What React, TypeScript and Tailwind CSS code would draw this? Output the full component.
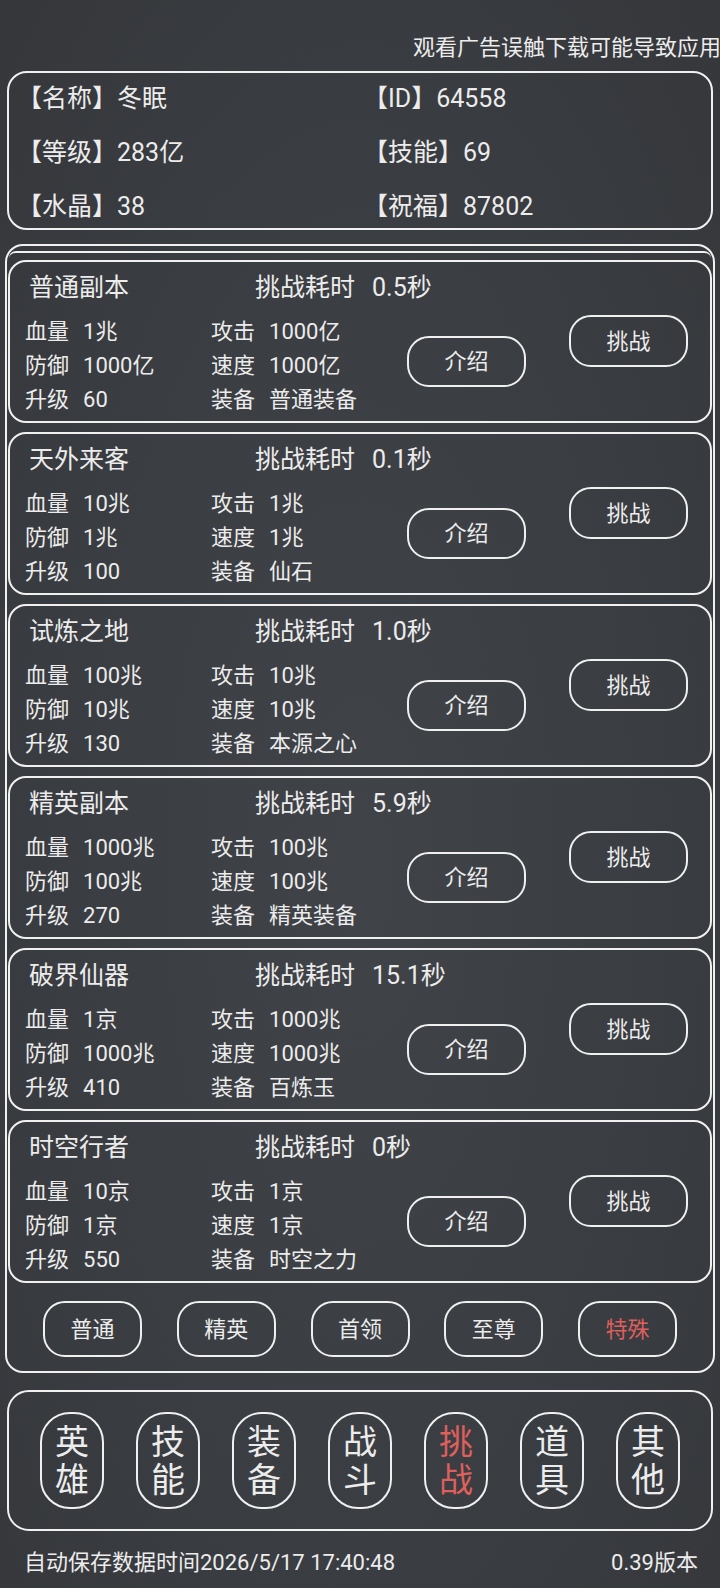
const dungeons = [
  { name: "普通副本", time: "0.5秒", hp: "1兆", def: "1000亿", lv: "60", atk: "1000亿", spd: "1000亿", gear: "普通装备" },
  { name: "天外来客", time: "0.1秒", hp: "10兆", def: "1兆", lv: "100", atk: "1兆", spd: "1兆", gear: "仙石" },
  { name: "试炼之地", time: "1.0秒", hp: "100兆", def: "10兆", lv: "130", atk: "10兆", spd: "10兆", gear: "本源之心" },
  { name: "精英副本", time: "5.9秒", hp: "1000兆", def: "100兆", lv: "270", atk: "100兆", spd: "100兆", gear: "精英装备" },
  { name: "破界仙器", time: "15.1秒", hp: "1京", def: "1000兆", lv: "410", atk: "1000兆", spd: "1000兆", gear: "百炼玉" },
  { name: "时空行者", time: "0秒", hp: "10京", def: "1京", lv: "550", atk: "1京", spd: "1京", gear: "时空之力" },
];

const tabs = ["普通", "精英", "首领", "至尊", "特殊"];
const navs = ["英雄", "技能", "装备", "战斗", "挑战", "道具", "其他"];

const Stat = ({ label, value }: { label: string; value: string }) => (
  <div className="flex h-[34px] items-center whitespace-nowrap">
    <span className="mr-[14px]">{label}</span>
    <span>{value}</span>
  </div>
);

const DungeonCard = ({ d }: { d: (typeof dungeons)[number] }) => (
  <div className="flex h-[163px] items-start rounded-[18px] border-2 border-[#f0f0f0] pl-[15px]">
    <div className="w-[382px] shrink-0 pt-[10px]">
      <div className="flex h-[32px] items-center whitespace-nowrap text-[25px] leading-[32px]">
        <span className="ml-[4px] w-[226px] shrink-0">{d.name}</span>
        <span className="shrink-0">挑战耗时</span>
        <span className="ml-[17px] shrink-0">{d.time}</span>
      </div>
      <div className="mt-[10px] grid grid-cols-[186px_1fr] text-[22px]">
        <Stat label="血量" value={d.hp} />
        <Stat label="攻击" value={d.atk} />
        <Stat label="防御" value={d.def} />
        <Stat label="速度" value={d.spd} />
        <Stat label="升级" value={d.lv} />
        <Stat label="装备" value={d.gear} />
      </div>
    </div>
    <button className="mt-[74px] flex h-[51px] w-[119px] shrink-0 items-center justify-center rounded-[22px] border-2 border-[#f0f0f0] text-[22px]">
      介绍
    </button>
    <button className="ml-[43px] mt-[53px] flex h-[52px] w-[119px] shrink-0 items-center justify-center rounded-[22px] border-2 border-[#f0f0f0] text-[22px]">
      挑战
    </button>
  </div>
);

export default function App() {
  return (
    <div className="h-[1588px] w-[720px] overflow-hidden bg-[#3a3d41] bg-[radial-gradient(ellipse_at_50%_55%,#404348_0%,#3a3d41_55%,#35373b_100%)] font-['Roboto','Noto_Sans_CJK_SC',sans-serif] text-[#ececec]">
      <div className="overflow-hidden whitespace-nowrap pl-[413px] pt-[34px] text-[22px] leading-[28px]">
        观看广告误触下载可能导致应用闪退
      </div>

      <div className="mx-[7px] mt-[9px] grid h-[159px] grid-cols-[346px_1fr] gap-y-[13px] rounded-[20px] border-2 border-[#f0f0f0] pb-[1px] pl-[8px] pt-[6px] text-[25px]">
        <div className="flex h-[40px] items-center">【名称】冬眠</div>
        <div className="flex h-[40px] items-center">【ID】64558</div>
        <div className="flex h-[40px] items-center">【等级】283亿</div>
        <div className="flex h-[40px] items-center">【技能】69</div>
        <div className="flex h-[40px] items-center">【水晶】38</div>
        <div className="flex h-[40px] items-center">【祝福】87802</div>
      </div>

      <div className="ml-[5px] mt-[14px] w-[710px] rounded-[18px] border-2 border-[#f0f0f0] pb-[14px]">
        <div className="mx-[2px] mt-[5px] h-[7px] rounded-t-[16px] border-t-2 border-[#f0f0f0]" />
        <div className="mt-[2px] flex flex-col gap-[9px] px-[1px]">
          {dungeons.map((d) => (
            <DungeonCard key={d.name} d={d} />
          ))}
        </div>
        <div className="mt-[18px] flex justify-between px-[36px]">
          {tabs.map((t) => (
            <button
              key={t}
              className={`flex h-[56px] w-[99px] items-center justify-center rounded-[22px] border-2 border-[#f0f0f0] text-[22px] ${
                t === "特殊" ? "text-[#de5f5c]" : ""
              }`}
            >
              {t}
            </button>
          ))}
        </div>
      </div>

      <div className="mx-[7px] mt-[17px] flex justify-between rounded-[22px] border-2 border-[#f0f0f0] px-[31px] pb-[20px] pt-[20px]">
        {navs.map((n) => (
          <button
            key={n}
            className={`flex h-[97px] w-[64px] flex-col items-center justify-center rounded-[30px] border-2 border-[#f0f0f0] text-[34px] leading-[38px] ${
              n === "挑战" ? "text-[#de5f5c]" : ""
            }`}
          >
            <span>{n[0]}</span>
            <span>{n[1]}</span>
          </button>
        ))}
      </div>

      <div className="mt-[18px] flex justify-between pl-[24px] pr-[22px] text-[22px] leading-[28px]">
        <span>自动保存数据时间2026/5/17 17:40:48</span>
        <span>0.39版本</span>
      </div>
    </div>
  );
}
